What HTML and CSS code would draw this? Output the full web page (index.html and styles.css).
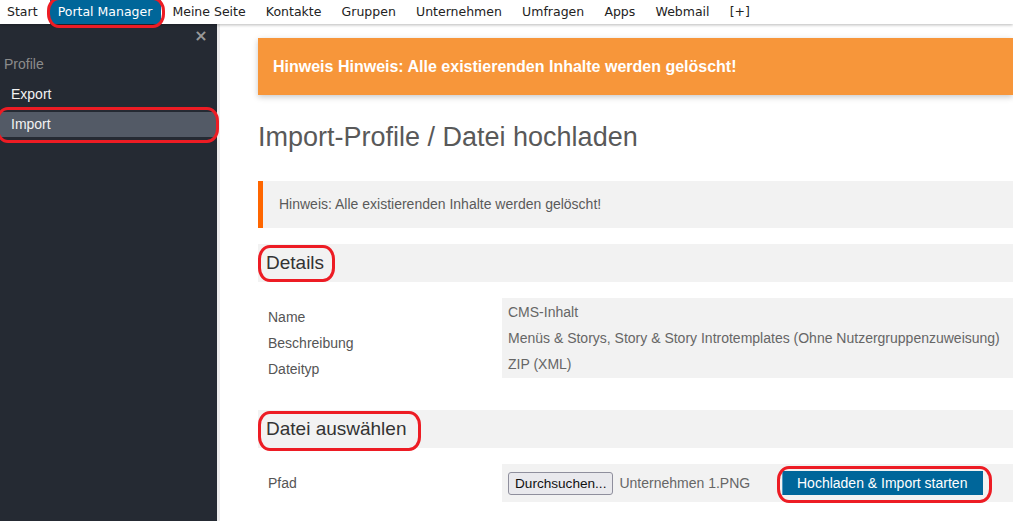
FILE: index.html
```html
<!DOCTYPE html>
<html lang="de">
<head>
<meta charset="utf-8">
<title>Import-Profile / Datei hochladen</title>
<link rel="stylesheet" href="styles.css">
</head>
<body>
<nav class="topnav">
  <a class="nav-item first">Start</a>
  <a class="nav-item active">Portal Manager</a>
  <a class="nav-item">Meine Seite</a>
  <a class="nav-item">Kontakte</a>
  <a class="nav-item">Gruppen</a>
  <a class="nav-item">Unternehmen</a>
  <a class="nav-item">Umfragen</a>
  <a class="nav-item">Apps</a>
  <a class="nav-item">Webmail</a>
  <a class="nav-item">[+]</a>
</nav>
<div class="layout">
  <aside class="sidebar">
    <div class="close-row"><span class="close">×</span></div>
    <div class="side-heading">Profile</div>
    <div class="side-item">Export</div>
    <div class="side-item selected">Import</div>
  </aside>
  <main class="main">
    <div class="alert-orange">Hinweis Hinweis: Alle existierenden Inhalte werden gelöscht!</div>
    <h1 class="title">Import-Profile / Datei hochladen</h1>
    <div class="hint">Hinweis: Alle existierenden Inhalte werden gelöscht!</div>
    <h2 class="section-head">Details</h2>
    <div class="detail-row">
      <div class="labels">
        <div class="label">Name</div>
        <div class="label">Beschreibung</div>
        <div class="label">Dateityp</div>
      </div>
      <div class="values">
        <div class="value">CMS-Inhalt</div>
        <div class="value">Menüs &amp; Storys, Story &amp; Story Introtemplates (Ohne Nutzergruppenzuweisung)</div>
        <div class="value">ZIP (XML)</div>
      </div>
    </div>
    <h2 class="section-head section-gap">Datei auswählen</h2>
    <div class="file-row">
      <div class="file-label">Pfad</div>
      <div class="file-box">
        <div class="file-input">
          <button class="browse" type="button">Durchsuchen...</button>
          <span class="file-name">Unternehmen 1.PNG</span>
        </div>
        <button class="primary" type="button">Hochladen &amp; Import starten</button>
      </div>
    </div>
  </main>
</div>
<div class="mark mark-nav"></div>
<div class="mark mark-import"></div>
<div class="mark mark-details"></div>
<div class="mark mark-datei"></div>
<div class="mark mark-button"></div>
</body>
</html>
```
FILE: styles.css
```css
html, body {
  margin: 0;
  padding: 0;
}
body {
  width: 1013px;
  height: 521px;
  overflow: hidden;
  position: relative;
  background: #ffffff;
  font-family: "Liberation Sans", Arial, sans-serif;
  font-size: 14px;
  color: #555555;
}

/* top navigation */
.topnav {
  position: relative;
  z-index: 2;
  display: flex;
  height: 24px;
  background: #ffffff;
  box-shadow: 0 1px 3px rgba(0, 0, 0, 0.28);
  font-family: "DejaVu Sans", Verdana, sans-serif;
  font-size: 12.5px;
}
.nav-item {
  display: block;
  padding: 0 10.1px;
  line-height: 23px;
  height: 24px;
  color: #222222;
  white-space: nowrap;
}
.nav-item.first {
  padding-left: 7px;
}
.nav-item.active {
  background: #006699;
  color: #ffffff;
  padding: 0 9px 0 8px;
  margin: 0 1px 0 2px;
}

/* layout */
.layout {
  display: flex;
  height: 497px;
}
.sidebar {
  width: 217px;
  flex: none;
  background: #252a33;
}
.close-row {
  height: 24px;
  display: flex;
  justify-content: flex-end;
  margin-bottom: 4px;
}
.close {
  width: 14px;
  margin-right: 9px;
  line-height: 24px;
  font-size: 16px;
  font-weight: bold;
  color: #9a9a9a;
  text-align: center;
  font-family: "DejaVu Sans", sans-serif;
}
.side-heading {
  height: 25px;
  line-height: 25px;
  padding-left: 4px;
  margin-bottom: 5px;
  color: #8c8c8c;
}
.side-item {
  height: 25px;
  line-height: 25px;
  padding-left: 11px;
  margin-bottom: 5px;
  color: #f2f2f2;
}
.side-item.selected {
  background: #535a66;
}

.main {
  flex: 1;
  min-width: 0;
  border-left: 3px solid #ececec;
  padding: 14px 0 0 38px;
}

.alert-orange {
  background: #f7963a;
  color: #ffffff;
  font-weight: bold;
  font-size: 16px;
  line-height: 19px;
  height: 19px;
  padding: 19px 15px;
  box-shadow: 0 2px 6px rgba(0, 0, 0, 0.22);
  white-space: nowrap;
}

.title {
  margin: 26px 0 28px;
  font-size: 27px;
  line-height: 32px;
  font-weight: normal;
  color: #595959;
}

.hint {
  background: #f2f2f2;
  border-left: 5px solid #ff6600;
  padding: 15px 16px;
  line-height: 17px;
  color: #5a5a5a;
}

.section-head {
  margin: 16px 0 0;
  background: #f2f2f2;
  padding: 8px 8px;
  font-size: 19px;
  line-height: 22px;
  font-weight: normal;
  color: #333333;
}
.section-gap {
  margin-top: 32px;
}

.detail-row {
  display: flex;
  align-items: flex-start;
  margin-top: 16px;
}
.labels {
  width: 234px;
  flex: none;
  padding: 6px 0 0 10px;
  margin-bottom: -6px;
}
.label, .value {
  height: 26px;
  line-height: 26px;
  white-space: nowrap;
}
.values {
  flex: 1;
  background: #f2f2f2;
  padding: 1px 6px;
  color: #666666;
}

.file-row {
  display: flex;
  align-items: center;
  margin-top: 16px;
}
.file-label {
  width: 234px;
  flex: none;
  padding-left: 10px;
}
.file-box {
  flex: 1;
  display: flex;
  align-items: center;
  background: #f2f2f2;
  height: 38px;
  padding: 0 6px;
}
.file-input {
  display: flex;
  align-items: center;
  width: 274px;
}
.browse {
  height: 23px;
  padding: 0 6px;
  border: 1px solid #8f8f9d;
  border-radius: 3px;
  background: #e9e9ed;
  font-family: "Liberation Sans", Arial, sans-serif;
  font-size: 13.6px;
  color: #111111;
}
.file-name {
  margin-left: 6px;
  color: #666666;
  white-space: nowrap;
}
.primary {
  height: 24px;
  padding: 0 16px 0 14px;
  border: none;
  border-left: 1px solid #4d9bc4;
  background: #00669a;
  color: #ffffff;
  font-family: "Liberation Sans", Arial, sans-serif;
  font-size: 14px;
  white-space: nowrap;
}

/* red annotation outlines drawn over the screenshot */
.mark {
  position: absolute;
  z-index: 5;
  border: 3px solid #ed1c24;
  border-radius: 12px / 14px;
  pointer-events: none;
}
.mark-nav {
  left: 47px;
  top: -3px;
  width: 112px;
  height: 25px;
}
.mark-import {
  left: -4px;
  top: 107px;
  width: 217px;
  height: 30px;
}
.mark-details {
  left: 258px;
  top: 245px;
  width: 71px;
  height: 31px;
}
.mark-datei {
  left: 258px;
  top: 411px;
  width: 157px;
  height: 34px;
}
.mark-button {
  left: 777px;
  top: 466px;
  width: 209px;
  height: 31px;
}
```
